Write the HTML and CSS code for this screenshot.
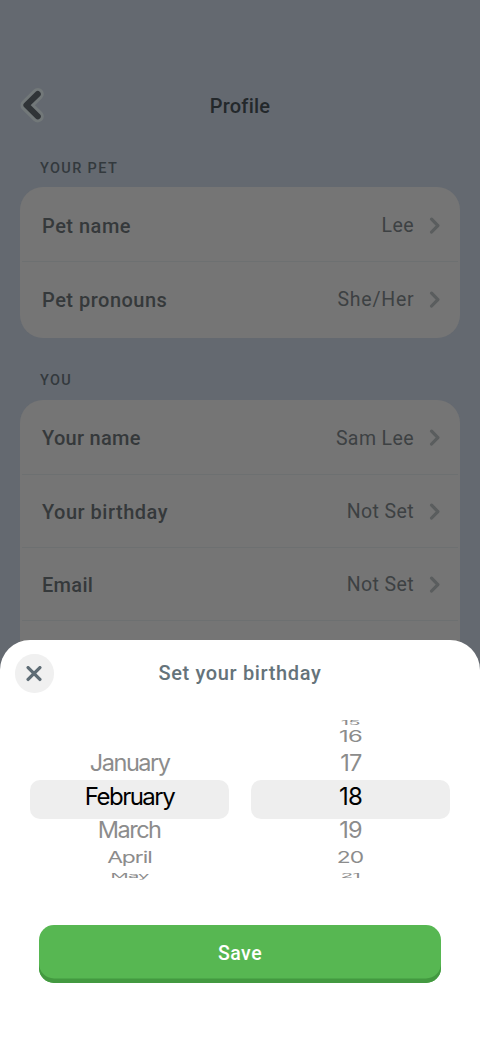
FILE: index.html
```html
<!DOCTYPE html>
<html lang="en">
<head>
<meta charset="utf-8">
<title>Profile</title>
<link rel="stylesheet" href="styles.css">
</head>
<body>
<svg class="defs" width="0" height="0"><symbol id="chevron" viewBox="0 0 12 18"><path d="M2.6 2.2 L8.9 8.6 L2.6 15"/></symbol></svg>
<main class="profile">
  <header class="topbar">
    <svg class="back" viewBox="0 0 26 38" width="26" height="38"><path class="halo" d="M17.8 7 L6.4 18.2 L17.8 29.4"/><path class="arrow" d="M17.8 7 L6.4 18.2 L17.8 29.4"/></svg>
    <h1>Profile</h1>
  </header>
  <h2 class="caption-pet">YOUR PET</h2>
  <section class="card card-pet">
    <div class="row"><span class="label">Pet name</span><span class="value">Lee</span><svg class="chev"><use href="#chevron"/></svg></div>
    <div class="row"><span class="label">Pet pronouns</span><span class="value wide">She/Her</span><svg class="chev"><use href="#chevron"/></svg></div>
  </section>
  <h2 class="caption-you">YOU</h2>
  <section class="card card-you">
    <div class="row"><span class="label snug">Your name</span><span class="value">Sam Lee</span><svg class="chev"><use href="#chevron"/></svg></div>
    <div class="row"><span class="label">Your birthday</span><span class="value">Not Set</span><svg class="chev"><use href="#chevron"/></svg></div>
    <div class="row"><span class="label snug">Email</span><span class="value">Not Set</span><svg class="chev"><use href="#chevron"/></svg></div>
  </section>
</main>
<section class="sheet">
  <header class="sheet-head">
    <button class="close" aria-label="Close"><svg viewBox="0 0 16 16" width="16" height="16"><path d="M2.1 1.6 L13.9 13.4 M13.9 1.6 L2.1 13.4"/></svg></button>
    <h3>Set your birthday</h3>
  </header>
  <div class="wheels">
    <div class="wheel months">
      <div class="item i-minus3"></div>
      <div class="item i-minus2"></div>
      <div class="item i-minus1"><span>January</span></div>
      <div class="item current"><span>February</span></div>
      <div class="item i-plus1"><span>March</span></div>
      <div class="item i-plus2"><span>April</span></div>
      <div class="item i-plus3"><span>May</span></div>
    </div>
    <div class="wheel">
      <div class="item i-minus3"><span>15</span></div>
      <div class="item i-minus2"><span>16</span></div>
      <div class="item i-minus1"><span>17</span></div>
      <div class="item current"><span>18</span></div>
      <div class="item i-plus1"><span>19</span></div>
      <div class="item i-plus2"><span>20</span></div>
      <div class="item i-plus3"><span>21</span></div>
    </div>
  </div>
  <button class="save"><span>Save</span></button>
</section>
</body>
</html>
```
FILE: styles.css
```css
* { box-sizing: border-box; }
body { margin: 0; width: 480px; height: 1040px; position: relative; overflow: hidden; font-family: Roboto, sans-serif; background: #646970; }
h1, h2, h3 { margin: 0; font-weight: 500; }
button { border: 0; padding: 0; font-family: inherit; }
span, h2 { white-space: nowrap; }
.defs { display: block; height: 0; }
.profile { height: 1040px; padding: 76px 20px 0; display: flex; flex-direction: column; background: #646970; }
.topbar { height: 60px; display: grid; grid-template-columns: 26px 1fr 26px; align-items: center; }
.back { overflow: visible; }
.back path { fill: none; stroke-linecap: round; stroke-linejoin: round; }
.back .halo { stroke: #727879; stroke-width: 12; }
.back .arrow { stroke: #303437; stroke-width: 6; }
h1 { text-align: center; font-size: 20px; line-height: 60px; color: #23282b; letter-spacing: .2px; }
h2 { height: 20px; line-height: 20px; font-size: 14.5px; letter-spacing: 1.35px; color: #33393d; padding-left: 20px; }
.caption-pet { margin-top: 23px; }
.caption-you { margin-top: 33px; }
.card { background: #757575; border-radius: 23px; padding: 0 2px; margin-top: 9px; }
.card-pet { height: 151px; padding-top: 2px; margin-top: 8px; }
.card-you { height: 300px; padding-top: 1.5px; }
.row { height: 73.3px; padding: 1.4px 18px 0 20px; display: flex; align-items: center; border-bottom: 1px solid #6d7071; font-size: 20px; color: #35393b; letter-spacing: .5px; }
.card-pet .row:last-child { border-bottom: 0; }
.label { flex: 1; font-weight: 500; }
.snug { letter-spacing: .3px; }
.value { color: #3d4143; font-weight: 400; font-size: 19.5px; letter-spacing: .4px; }
.wide { letter-spacing: .75px; margin-right: -.35px; }
.chev { width: 12px; height: 18px; margin: 0 -1px 0 15px; fill: none; stroke: #5a5d5e; stroke-width: 3.2; stroke-linecap: round; stroke-linejoin: round; }
.sheet { position: absolute; left: 0; top: 640px; width: 480px; height: 400px; background: #fff; border-radius: 30px 30px 0 0; padding: 14px 15px 0; display: flex; flex-direction: column; }
.sheet-head { height: 39px; display: grid; grid-template-columns: 38px 1fr 38px; align-items: center; }
.close { width: 38.5px; height: 38.5px; border-radius: 50%; background: #f0f0f0; display: grid; place-items: center; }
.close path { stroke: #5e6c75; stroke-width: 3.3; stroke-linecap: round; }
h3 { text-align: center; color: #65737a; font-size: 20px; letter-spacing: .65px; line-height: 39px; }
.wheels { display: grid; grid-template-columns: 199px 199px; gap: 22px; padding: 24px 15px 0; }
.wheel { height: 162px; display: flex; flex-direction: column; font-family: Inter, sans-serif; font-size: 24px; }
.item { display: flex; align-items: center; justify-content: center; color: #8c8c8c; letter-spacing: -.8px; }
.item span { display: block; line-height: 30px; padding-top: 2px; }
.months .item { letter-spacing: -1.5px; }
.months .i-plus2, .months .i-plus3 { letter-spacing: -1.1px; }
.i-minus3 { height: 9px; }
.i-minus2 { height: 20px; }
.i-minus1 { height: 34px; }
.current { height: 39px; background: #eee; border-radius: 10px; color: #000; padding-bottom: 7px; }
.i-plus1 { height: 21px; }
.i-plus2 { height: 34px; }
.i-plus3 { height: 1px; }
.i-minus3 span { transform: scale(.84, .28); }
.i-minus2 span { transform: scale(.99, .65); }
.i-minus1 span { transform: scale(.98, .93); }
.i-plus1 span { transform: scale(.98, .93); }
.i-plus2 span { transform: scale(.95, .67); }
.i-plus3 span { transform: scale(.84, .28); }
.save { margin: 46px 24px 0; height: 58px; border-radius: 15px; background: #57b752; box-shadow: inset 0 -4.5px #439940; color: #fff; font-size: 19.5px; font-weight: 500; letter-spacing: .5px; padding-bottom: 2px; }
```
